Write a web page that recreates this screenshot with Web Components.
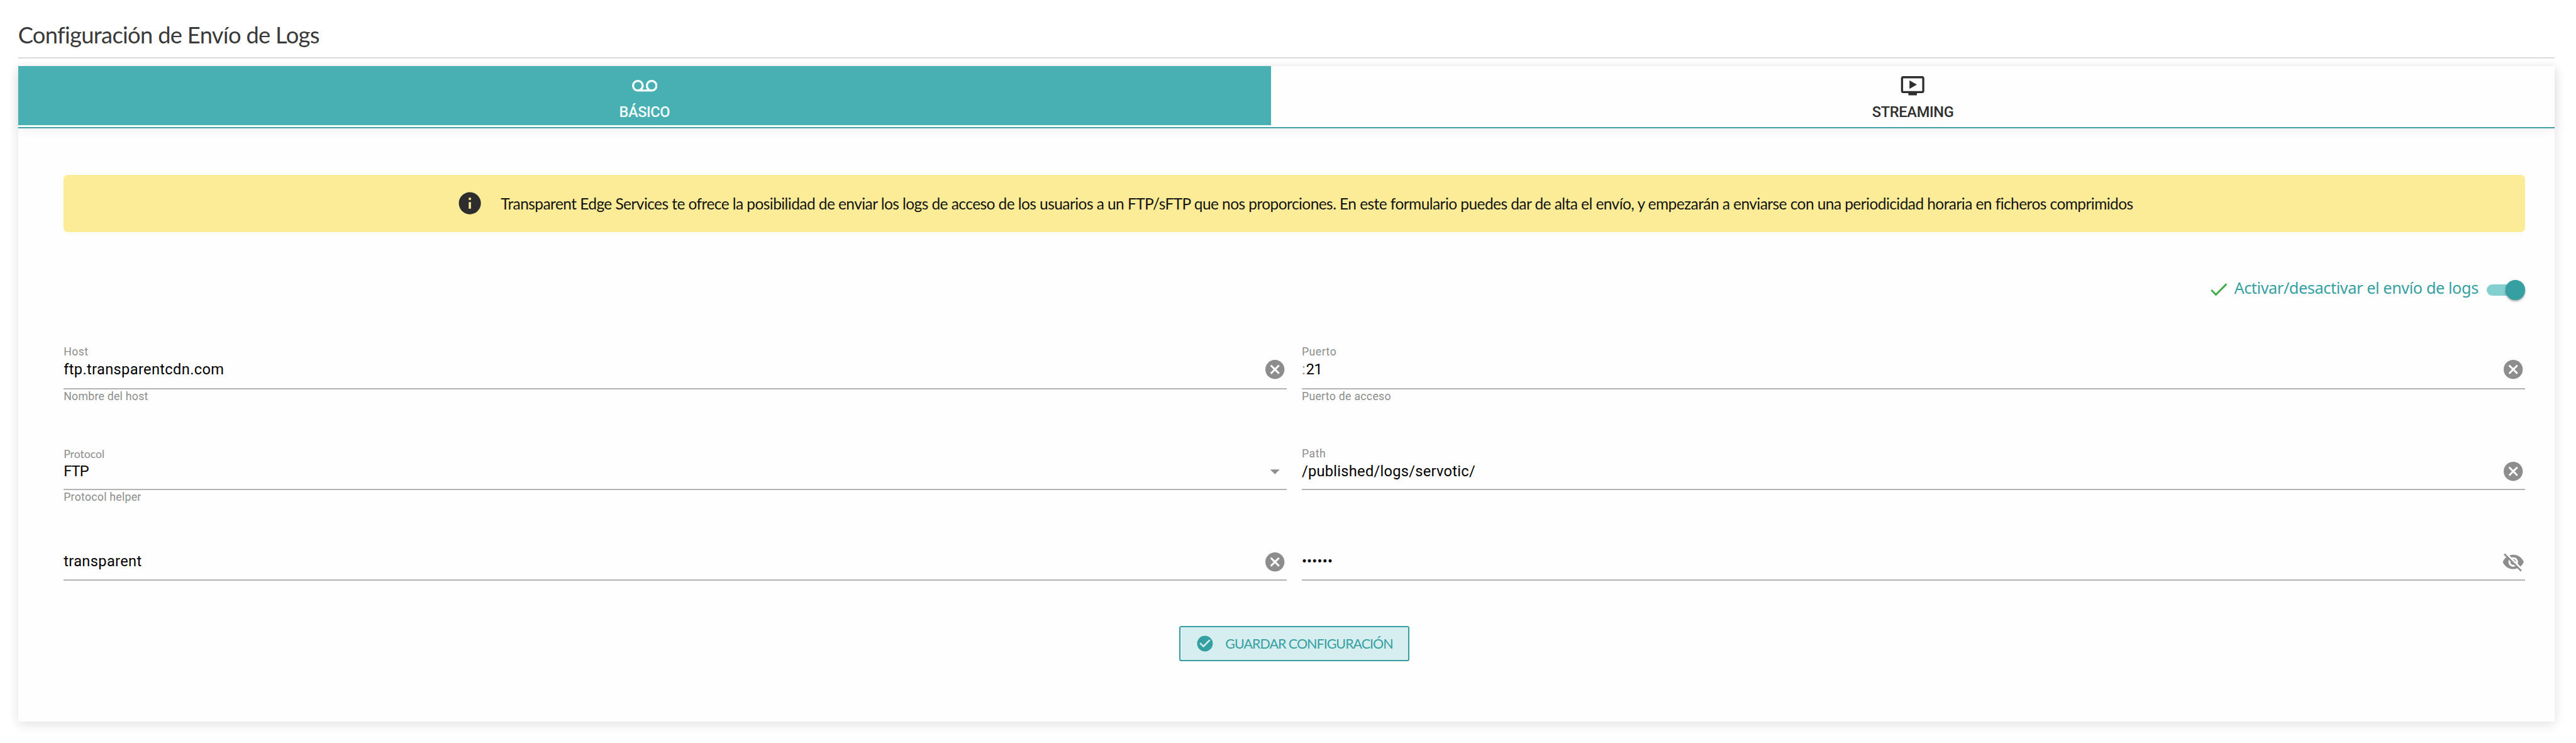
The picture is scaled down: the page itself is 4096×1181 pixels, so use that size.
<!DOCTYPE html>
<html lang="es">
<head>
<meta charset="utf-8">
<title>Configuración de Envío de Logs</title>
<style>
/* 1rem is one hundred design pixels */
html { font-size: calc(100vw / 48.56); background: #fff; }
body { margin: 0; font-family: Roboto, sans-serif; }
</style>
</head>
<body>
<log-settings></log-settings>
<script>
const ICONS = {
  voicemail: 'M18.5 6.5C15.46 6.5 13 8.96 13 12c0 1.33.47 2.55 1.26 3.5H9.74C10.53 14.55 11 13.33 11 12c0-3.04-2.46-5.5-5.5-5.5S0 8.96 0 12s2.46 5.5 5.5 5.5h13c3.04 0 5.5-2.46 5.5-5.5s-2.46-5.5-5.5-5.5zm-13 9C3.57 15.5 2 13.93 2 12s1.57-3.5 3.5-3.5S9 10.07 9 12s-1.57 3.5-3.5 3.5zm13 0c-1.93 0-3.5-1.57-3.5-3.5s1.57-3.5 3.5-3.5S22 10.07 22 12s-1.57 3.5-3.5 3.5z',
  ondemand: 'M21 3H3c-1.11 0-2 .89-2 2v12c0 1.1.89 2 2 2h5v2h8v-2h5c1.1 0 1.99-.9 1.99-2L23 5c0-1.11-.9-2-2-2zm0 14H3V5h18v12zm-5-6l-7 4V7z',
  info: 'M12 2C6.48 2 2 6.48 2 12s4.48 10 10 10 10-4.48 10-10S17.52 2 12 2zm1 15h-2v-6h2v6zm0-8h-2V7h2v2z',
  check: 'M9 16.17L4.83 12l-1.42 1.41L9 19 21 7l-1.41-1.41z',
  checkCircle: 'M12 2C6.48 2 2 6.48 2 12s4.48 10 10 10 10-4.48 10-10S17.52 2 12 2zm-2 15l-5-5 1.41-1.41L10 14.17l7.59-7.59L19 8l-9 9z',
  clear: 'M12 2C6.47 2 2 6.47 2 12s4.47 10 10 10 10-4.47 10-10S17.53 2 12 2zm5 13.59L15.59 17 12 13.41 8.41 17 7 15.59 10.59 12 7 8.41 8.41 7 12 10.59 15.59 7 17 8.41 13.41 12 17 15.59z',
  drop: 'M7 10l5 5 5-5z',
  eyeOff: 'M12 7c2.76 0 5 2.24 5 5 0 .65-.13 1.26-.36 1.83l2.92 2.92c1.51-1.26 2.7-2.89 3.43-4.75-1.73-4.39-6-7.5-11-7.5-1.4 0-2.74.25-3.98.7l2.16 2.16C10.74 7.13 11.35 7 12 7zM2 4.27l2.28 2.28.46.46C3.08 8.3 1.78 10.02 1 12c1.73 4.39 6 7.5 11 7.5 1.55 0 3.03-.3 4.38-.84l.42.42L19.73 22 21 20.73 3.27 3 2 4.27zM7.53 9.8l1.55 1.55c-.05.21-.08.43-.08.65 0 1.66 1.34 3 3 3 .22 0 .44-.03.65-.08l1.55 1.55c-.67.33-1.41.53-2.2.53-2.76 0-5-2.24-5-5 0-.79.2-1.53.53-2.2zm4.31-.78l3.15 3.15.02-.16c0-1.66-1.34-3-3-3l-.17.01z'
};
const define = (name, html, ready) => customElements.define(name, class extends HTMLElement {
  connectedCallback() {
    if (this.shadowRoot) return;
    const root = this.attachShadow({ mode: 'open' });
    root.innerHTML = typeof html === 'function' ? html(this) : html;
    if (ready) ready(this, root);
  }
});

define('ui-icon', el => `<style>
:host{display:block;flex:none;width:var(--size,.432rem);height:var(--size,.432rem)}
svg{display:block;width:100%;height:100%;fill:currentColor}
</style><svg viewBox="0 0 24 24"><path d="${ICONS[el.getAttribute('name')]}"/></svg>`);

/* Tracks its text so that it fills the width given in design pixels */
define('fit-text', `<style>:host{display:inline-block;white-space:nowrap}span{display:inline-block}</style><span><slot></slot></span>`, (el, root) => {
  const span = root.querySelector('span');
  const target = parseFloat(el.getAttribute('w')) * innerWidth / 4856;
  const gaps = el.textContent.length - 1;
  const width = span.getBoundingClientRect().width;
  if (width && gaps > 0) span.style.letterSpacing = ((target - width) / gaps) + 'px';
});

define('page-title', `<style>
:host{display:block;box-sizing:border-box;height:1.1rem;padding-top:.212rem;border-bottom:2px solid #dbdbdb;
font:400 .43rem/.88rem Lato,sans-serif;color:#3a3a3a}
</style><slot></slot>`);

define('tab-item', el => `<style>
:host{display:flex;flex-direction:column;align-items:center;box-sizing:border-box;height:1.12rem;padding-top:.13rem;color:#2f2f2f}
:host([active]){background:#48b0b2;color:#f3fcfb}
ui-icon{--size:.48rem}
div{margin-top:.066rem;font:500 .28rem/.4rem Roboto,sans-serif}
</style><ui-icon name="${el.getAttribute('icon')}"></ui-icon><div><slot></slot></div>`);

define('tab-bar', `<style>
:host{display:grid;grid-template-columns:23.62rem 1fr;box-sizing:border-box;height:1.18rem;background:#fefefe;
border-bottom:2px solid #3fa1a4;box-shadow:0 .02rem .2rem rgba(0,0,0,.07)}
</style><slot></slot>`);

define('info-banner', `<style>
:host{display:flex;align-items:center;gap:.33rem;box-sizing:border-box;height:1.08rem;padding:0 0 .02rem 7.41rem;
background:#fdec97;border-radius:.08rem;font:400 .29rem/.4rem Lato,sans-serif;color:#141414}
ui-icon{--size:.5rem;color:#2d2d2d}
.t{padding-top:.024rem}
</style><ui-icon name="info"></ui-icon><div class="t"><slot></slot></div>`);

define('log-switch', `<style>
:host{display:flex;align-items:center;justify-content:flex-end;height:.6rem;font:400 .3rem/.4rem "Noto Sans",sans-serif;color:#359fa1}
ui-icon{--size:.425rem;color:#43ab4b}
.t{padding:0 .16rem .04rem .075rem}
.track{position:relative;width:.72rem;height:.37rem;margin-top:.03rem}
.track::before{content:"";position:absolute;left:0;right:.1rem;top:.075rem;height:.22rem;border-radius:.11rem;background:#84cfd0}
.track::after{content:"";position:absolute;right:0;top:0;width:.37rem;height:.37rem;border-radius:50%;background:#359fa1;
box-shadow:0 .02rem .04rem rgba(0,0,0,.35)}
</style><ui-icon name="check"></ui-icon><div class="t"><slot></slot></div><div class="track"></div>`);

define('form-field', el => `<style>
:host{display:block;color:#8d8d8d;font-size:.21rem}
.label{box-sizing:border-box;height:.296rem;padding-top:.012rem;line-height:.28rem}
.control{display:flex;box-sizing:border-box;height:var(--control,.54rem);border-bottom:2px solid #b3b3b3;
padding-right:.007rem;font-size:.28rem;line-height:.37rem}
.value{flex:1;color:#000;padding-left:var(--indent,0)}
.prefix{width:.08rem}
ui-icon{--size:.432rem;margin:-.035rem 0 0}
.helper{padding-top:.012rem;line-height:.255rem}
</style><div class="label"><slot name="label"></slot></div>
<div class="control">${el.hasAttribute('prefix') ? `<div class="prefix">${el.getAttribute('prefix')}</div>` : ''}
<div class="value"><slot></slot></div><ui-icon name="${el.getAttribute('icon')}"></ui-icon></div>
<div class="helper"><slot name="helper"></slot></div>`);

define('save-button', `<style>
:host{display:flex;align-items:center;box-sizing:border-box;width:4.34rem;height:.66rem;padding-left:.28rem;margin:0 auto;
border:2px solid #359fa1;border-radius:.04rem;background:#d7eef0;color:#359fa1;font:400 .255rem/.4rem Lato,sans-serif}
ui-icon{--size:.355rem;margin:0 .21rem .01rem 0}
.t{padding-top:.016rem}
</style><ui-icon name="checkCircle"></ui-icon><div class="t"><slot></slot></div>`);

define('log-settings', `<style>
:host{display:block;box-sizing:border-box;height:100vh;padding:0 .4rem 0 .34rem;overflow:hidden}
.card{box-sizing:border-box;height:12.36rem;margin-top:.14rem;background:#fefefe;box-shadow:0 .06rem .2rem rgba(0,0,0,.12)}
.body{padding:.88rem .56rem 0 .86rem}
log-switch{margin-top:.77rem}
.rows{display:grid;grid-template-columns:1fr 1fr;column-gap:.28rem;grid-template-rows:1.92rem 1.7rem 1.69rem;margin-top:.738rem}
.r1{--control:.556rem}.r2{--control:.536rem}.r3{--control:.536rem}
.lato{font-family:Lato,sans-serif}
</style>
<page-title><fit-text w="568">Configuración de Envío de Logs</fit-text></page-title>
<div class="card">
<tab-bar>
<tab-item icon="voicemail" active><fit-text w="96">BÁSICO</fit-text></tab-item>
<tab-item icon="ondemand"><fit-text w="154">STREAMING</fit-text></tab-item>
</tab-bar>
<div class="body">
<info-banner><fit-text w="3077">Transparent Edge Services te ofrece la posibilidad de enviar los logs de acceso de los usuarios a un FTP/sFTP que nos proporciones. En este formulario puedes dar de alta el envío, y empezarán a enviarse con una periodicidad horaria en ficheros comprimidos</fit-text></info-banner>
<log-switch><fit-text w="461">Activar/desactivar el envío de logs</fit-text></log-switch>
<div class="rows">
<form-field class="r1" icon="clear"><fit-text slot="label" w="46">Host</fit-text><fit-text w="302">ftp.transparentcdn.com</fit-text><fit-text slot="helper" w="159">Nombre del host</fit-text></form-field>
<form-field class="r1" icon="clear" prefix=":"><fit-text slot="label" w="65">Puerto</fit-text><fit-text w="31">21</fit-text><fit-text slot="helper" w="168">Puerto de acceso</fit-text></form-field>
<form-field class="r2" icon="drop"><fit-text class="lato" slot="label" w="77">Protocol</fit-text><fit-text w="48">FTP</fit-text><fit-text slot="helper" w="146">Protocol helper</fit-text></form-field>
<form-field class="r2" icon="clear"><fit-text slot="label" w="45">Path</fit-text><fit-text w="327">/published/logs/servotic/</fit-text></form-field>
<form-field class="r3" icon="clear"><fit-text w="147">transparent</fit-text></form-field>
<form-field class="r3" icon="eyeOff"><fit-text w="58">••••••</fit-text></form-field>
</div>
<save-button><fit-text w="317">GUARDAR CONFIGURACIÓN</fit-text></save-button>
</div>
</div>`);
</script>
</body>
</html>
